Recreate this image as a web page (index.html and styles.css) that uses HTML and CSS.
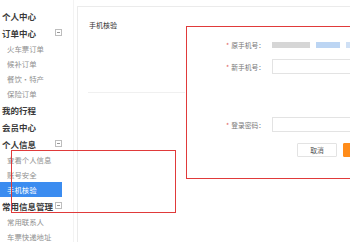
FILE: index.html
```html
<!DOCTYPE html>
<html lang="zh-CN">
<head>
<meta charset="utf-8">
<title>手机核验</title>
<link rel="stylesheet" href="styles.css">
</head>
<body>
<div class="page">
  <aside class="side">
    <ul class="nav">
      <li class="head">个人中心</li>
      <li class="head">订单中心<span class="tog"></span></li>
      <li class="sub">火车票订单</li>
      <li class="sub">候补订单</li>
      <li class="sub">餐饮•特产</li>
      <li class="sub">保险订单</li>
      <li class="head">我的行程</li>
      <li class="head">会员中心</li>
      <li class="head">个人信息<span class="tog"></span></li>
      <li class="sub">查看个人信息</li>
      <li class="sub">账号安全</li>
      <li class="sub active">手机核验</li>
      <li class="head">常用信息管理<span class="tog"></span></li>
      <li class="sub">常用联系人</li>
      <li class="sub">车票快递地址</li>
    </ul>
  </aside>
  <main class="main">
    <h2 class="title">手机核验</h2>
    <div class="content">
      <div class="rule"></div>
      <form class="form">
        <div class="row">
          <label class="lbl"><span class="req">*</span>原手机号：</label>
          <div class="blur"><span class="b1"></span><span class="b2"></span><span class="b3"></span></div>
        </div>
        <div class="row row2">
          <label class="lbl"><span class="req">*</span>新手机号：</label>
          <span class="input"></span>
        </div>
        <div class="row row3">
          <label class="lbl"><span class="req">*</span>登录密码：</label>
          <span class="input"></span>
        </div>
        <div class="actions">
          <span class="btn">取消</span>
          <span class="btn primary">确定</span>
        </div>
      </form>
    </div>
  </main>
  <div class="mark mark-form"></div>
  <div class="mark mark-side"></div>
</div>
</body>
</html>
```

FILE: styles.css
```css
* { box-sizing: border-box; }
html, body { margin: 0; padding: 0; background: #fff; }
body {
  width: 350px;
  height: 242px;
  overflow: hidden;
  font-family: "Noto Sans CJK SC", "Noto Sans", sans-serif;
  color: #333;
}
.page {
  position: relative;
  display: flex;
  width: 350px;
  height: 242px;
  overflow: hidden;
}
.side {
  flex: 0 0 74px;
  border-right: 1px solid #f3f3f3;
}
.nav {
  list-style: none;
  margin: 0;
  padding: 7px 0 0 0;
  width: 62px;
}
.nav li {
  position: relative;
  display: flex;
  align-items: center;
  white-space: nowrap;
}
.head {
  height: 17px;
  padding-left: 2px;
  font-size: 8.5px;
  font-weight: bold;
  color: #3a3a3a;
}
.sub {
  height: 15px;
  padding-left: 7px;
  font-size: 7.4px;
  color: #909090;
}
.sub.active {
  background: #3b8cf0;
  color: #fff;
}
.tog {
  position: absolute;
  left: 55px;
  top: 5px;
  width: 7px;
  height: 7px;
  border: 1px solid #bdbdbd;
  background: #fff;
}
.tog::after {
  content: "";
  position: absolute;
  left: 1px;
  right: 1px;
  top: 2px;
  height: 1px;
  background: #999;
}
.main {
  flex: 1 1 auto;
  margin: 6px 0 0 3px;
  border-top: 1px solid #ebebeb;
  border-left: 1px solid #ebebeb;
  padding: 13px 0 0 10px;
}
.title {
  margin: 0 0 0 1px;
  height: 10px;
  line-height: 10px;
  font-size: 7px;
  font-weight: normal;
  color: #333;
}
.content {
  display: flex;
  align-items: flex-start;
  margin-top: 7.5px;
}
.rule {
  flex: 0 0 97px;
  height: 1px;
  margin-top: 54px;
  background: #f0f0f0;
}
.form {
  margin: 0 0 0 41px;
  display: flex;
  flex-direction: column;
}
.row {
  display: flex;
  align-items: center;
  height: 15px;
}
.row2 { margin-top: 6.5px; }
.row3 { margin-top: 43px; }
.lbl {
  flex: 0 0 46px;
  font-size: 6.8px;
  color: #777;
  white-space: nowrap;
}
.req {
  color: #e05555;
  margin-right: 2px;
}
.blur {
  display: flex;
  align-items: center;
  gap: 6px;
}
.blur span { display: block; height: 6px; }
.b1 { width: 38px; background: #d6d6d6; }
.b2 { width: 24px; background: #bcd5f3; }
.b3 { width: 20px; background: #cfe0f5; }
.input {
  display: block;
  width: 120px;
  height: 15px;
  border: 1px solid #e3e3e3;
  background: #fff;
}
.actions {
  display: flex;
  gap: 6px;
  margin: 11px 0 0 71px;
}
.btn {
  display: flex;
  align-items: center;
  justify-content: center;
  width: 40px;
  height: 14px;
  border: 1px solid #e3e3e3;
  border-radius: 1px;
  font-size: 6.8px;
  color: #555;
  background: #fff;
}
.btn.primary {
  background: #ff8c1a;
  border-color: #ff8c1a;
  color: #fff;
}
.mark {
  position: absolute;
  border: 1.5px solid #e03a3a;
  pointer-events: none;
}
.mark-form {
  left: 186px;
  top: 26px;
  width: 200px;
  height: 153px;
}
.mark-side {
  left: 10.5px;
  top: 149.5px;
  width: 165px;
  height: 63px;
}
```
